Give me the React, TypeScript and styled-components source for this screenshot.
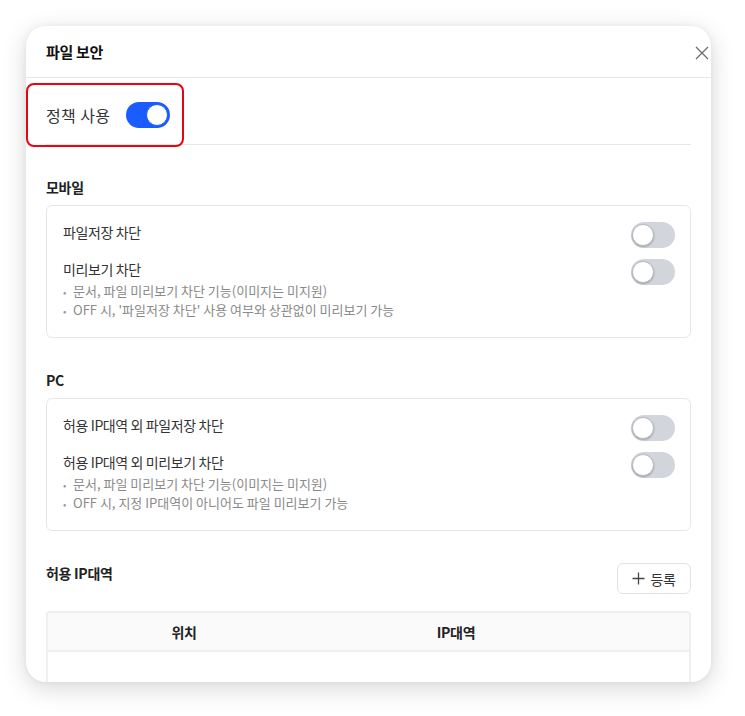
import React from "react";
import styled, { createGlobalStyle } from "styled-components";

const Global = createGlobalStyle`
  html, body { margin: 0; padding: 0; background: #ffffff; }
  body { font-family: "Noto Sans CJK KR", "Noto Sans", sans-serif; color: #222; }
  * { box-sizing: border-box; }
`;

const Page = styled.div`
  padding: 26px 0 34px 26px;
`;

const Card = styled.div`
  width: 685px;
  height: 656px;
  background: #fff;
  border-radius: 20px;
  box-shadow: 0 6px 24px rgba(0, 0, 0, 0.16), 0 0 6px rgba(0, 0, 0, 0.05);
  overflow: hidden;
  display: flex;
  flex-direction: column;
`;

const Header = styled.div`
  height: 52px;
  flex: none;
  display: flex;
  align-items: center;
  justify-content: space-between;
  padding: 0 2px 0 20px;
  border-bottom: 1px solid #e6e6e6;
`;

const Title = styled.h1`
  margin: 0;
  font-size: 15px;
  font-weight: 700;
  letter-spacing: -0.3px;
  color: #111;
`;

const CloseButton = styled.button`
  border: 0;
  background: none;
  padding: 0;
  width: 14px;
  height: 14px;
  margin-top: 3px;
  display: flex;
  color: #666;
`;

const Body = styled.div`
  flex: 1;
  overflow: hidden;
  padding: 0 20px;
`;

const PolicySection = styled.div`
  position: relative;
  display: flex;
  align-items: center;
  gap: 16px;
  padding: 24px 0 16px;
  border-bottom: 1px solid #e6e6e6;
`;

const Highlight = styled.div`
  position: absolute;
  left: -20px;
  top: 5px;
  width: 158px;
  height: 64px;
  border: 2px solid #e30613;
  border-radius: 8px;
  pointer-events: none;
`;

const PolicyLabel = styled.span`
  font-size: 16px;
  color: #333;
  letter-spacing: 0.4px;
  line-height: 26px;
`;

const Track = styled.span<{ $on?: boolean }>`
  position: relative;
  flex: none;
  width: 44px;
  height: 26px;
  border-radius: 13px;
  background: ${(p) => (p.$on ? "#1a5cff" : "#d2d6dc")};
`;

const Knob = styled.span<{ $on?: boolean }>`
  position: absolute;
  top: 2px;
  left: ${(p) => (p.$on ? "20px" : "1px")};
  width: 22px;
  height: 22px;
  border-radius: 50%;
  background: #fff;
  border: 1.5px solid ${(p) => (p.$on ? "#1a5cff" : "#b9bdc3")};
  box-shadow: ${(p) => (p.$on ? "none" : "0 1px 2px rgba(0,0,0,0.25)")};
`;

const Toggle = ({ on }: { on?: boolean }) => (
  <Track $on={on}>
    <Knob $on={on} />
  </Track>
);

const SectionTitle = styled.h2`
  margin: 32px 0 8px;
  font-size: 14px;
  font-weight: 700;
  line-height: 20px;
  letter-spacing: -0.3px;
  color: #222;
`;

const OptionBox = styled.div`
  border: 1px solid #e6e6e6;
  border-radius: 6px;
  padding: 16px 15px 18px 16px;
  display: flex;
  flex-direction: column;
  gap: 11px;
`;

const OptionRow = styled.div`
  display: flex;
  justify-content: space-between;
  align-items: flex-start;
`;

const OptionText = styled.div`
  display: flex;
  flex-direction: column;
`;

const OptionLabel = styled.span`
  font-size: 14px;
  line-height: 20px;
  letter-spacing: -0.4px;
  color: #333;
`;

const Notes = styled.ul`
  margin: 2px 0 0;
  padding: 0;
  list-style: none;
`;

const Note = styled.li`
  font-size: 13px;
  line-height: 19px;
  height: 19px;
  letter-spacing: 0;
  color: #8a8a8a;
  &::before {
    content: "•";
    display: inline-block;
    width: 10px;
    line-height: 0;
    font-size: 10px;
    color: #9a9a9a;
  }
`;

const ListHeader = styled.div`
  margin-top: 32px;
  display: flex;
  justify-content: space-between;
  align-items: flex-start;
`;

const ListTitle = styled(SectionTitle)`
  margin: 0;
`;

const AddButton = styled.button`
  width: 74px;
  height: 31px;
  border: 1px solid #e3e3e3;
  border-radius: 6px;
  background: #fff;
  display: flex;
  align-items: center;
  justify-content: center;
  gap: 5px;
  font-family: inherit;
  font-size: 14px;
  letter-spacing: -0.3px;
  color: #333;
  padding: 0;
`;

const Table = styled.div`
  margin-top: 17px;
  border: 2px solid #efefef;
  border-radius: 4px 4px 0 0;
`;

const HeadRow = styled.div`
  display: grid;
  grid-template-columns: 272px 272px 1fr;
  height: 39px;
  align-items: center;
  background: #fafafa;
  border-bottom: 2px solid #efefef;
`;

const HeadCell = styled.div`
  text-align: center;
  font-size: 14px;
  font-weight: 700;
  letter-spacing: -0.3px;
  color: #222;
`;

const EmptyRow = styled.div`
  height: 60px;
  background: #fff;
`;

const PlusIcon = () => (
  <svg width="13" height="13" viewBox="0 0 13 13" fill="none" stroke="#444" strokeWidth="1.3">
    <path d="M6.5 0.5v12M0.5 6.5h12" />
  </svg>
);

const CloseIcon = () => (
  <svg width="14" height="14" viewBox="0 0 14 14" fill="none" stroke="#6b6b6b" strokeWidth="1.2">
    <path d="M1 1l12 12M13 1L1 13" />
  </svg>
);

export default function App() {
  return (
    <>
      <Global />
      <Page>
        <Card>
          <Header>
            <Title>파일 보안</Title>
            <CloseButton aria-label="닫기">
              <CloseIcon />
            </CloseButton>
          </Header>
          <Body>
            <PolicySection>
              <Highlight />
              <PolicyLabel>정책 사용</PolicyLabel>
              <Toggle on />
            </PolicySection>

            <SectionTitle>모바일</SectionTitle>
            <OptionBox>
              <OptionRow>
                <OptionLabel>파일저장 차단</OptionLabel>
                <Toggle />
              </OptionRow>
              <OptionRow>
                <OptionText>
                  <OptionLabel>미리보기 차단</OptionLabel>
                  <Notes>
                    <Note>문서, 파일 미리보기 차단 기능(이미지는 미지원)</Note>
                    <Note>OFF 시, '파일저장 차단' 사용 여부와 상관없이 미리보기 가능</Note>
                  </Notes>
                </OptionText>
                <Toggle />
              </OptionRow>
            </OptionBox>

            <SectionTitle>PC</SectionTitle>
            <OptionBox>
              <OptionRow>
                <OptionLabel>허용 IP대역 외 파일저장 차단</OptionLabel>
                <Toggle />
              </OptionRow>
              <OptionRow>
                <OptionText>
                  <OptionLabel>허용 IP대역 외 미리보기 차단</OptionLabel>
                  <Notes>
                    <Note>문서, 파일 미리보기 차단 기능(이미지는 미지원)</Note>
                    <Note>OFF 시, 지정 IP대역이 아니어도 파일 미리보기 가능</Note>
                  </Notes>
                </OptionText>
                <Toggle />
              </OptionRow>
            </OptionBox>

            <ListHeader>
              <ListTitle>허용 IP대역</ListTitle>
              <AddButton>
                <PlusIcon />
                등록
              </AddButton>
            </ListHeader>
            <Table>
              <HeadRow>
                <HeadCell>위치</HeadCell>
                <HeadCell>IP대역</HeadCell>
                <HeadCell />
              </HeadRow>
              <EmptyRow />
            </Table>
          </Body>
        </Card>
      </Page>
    </>
  );
}
